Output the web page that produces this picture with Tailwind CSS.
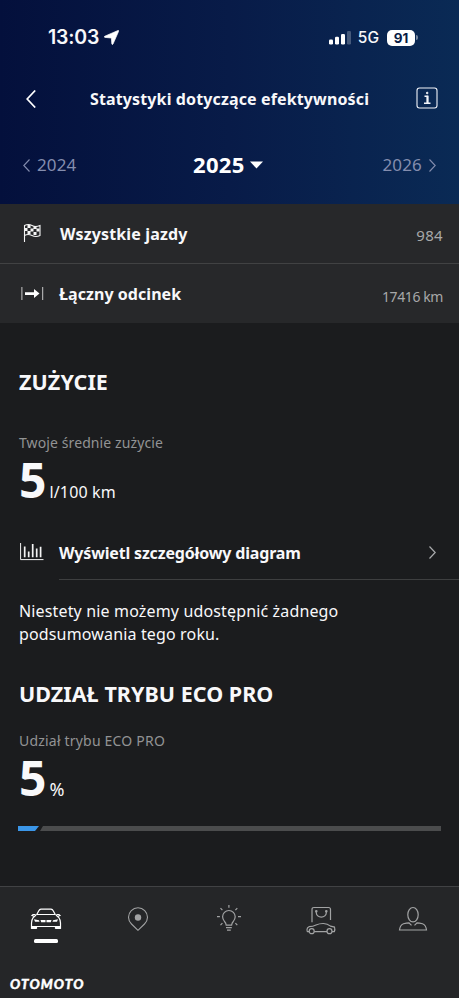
<!DOCTYPE html>
<html lang="pl">
<head>
<meta charset="utf-8">
<meta name="viewport" content="width=device-width">
<title>Statystyki dotyczące efektywności</title>
<script src="https://cdn.jsdelivr.net/npm/@tailwindcss/browser@4"></script>
</head>
<body class="w-[459px] h-[998px] overflow-hidden flex flex-col bg-[#1b1c1e] text-[#f8f8fa] font-['Noto_Sans','Open_Sans',sans-serif] whitespace-nowrap">
<header class="h-[204px] shrink-0 bg-linear-to-r from-[#04103c] via-[#081b48] to-[#0a2a55]">
  <div class="h-[75px] pl-[48px] pr-[41px] flex items-center font-['Inter',sans-serif]">
    <span class="text-[19.500px] font-semibold leading-none tracking-[-0.2px]">13:03</span>
    <svg class="ml-[5px]" width="15" height="15" viewBox="0 0 15 15" fill="#fff"><path d="M14 .5Q15 .2 14.6 1.3L9 14Q8.3 15.3 7.800 13.800L7.400 8 1 7.400Q-.5 7 .8 6.200Z" stroke="#fff" stroke-width=".7"/></svg>
    <div class="ml-auto flex items-center">
      <svg width="22" height="14" viewBox="0 0 22 14" fill="#fff"><rect x="0" y="8.5" width="4" height="5" rx="1.2"/><rect x="6" y="5.8" width="4" height="7.7" rx="1.2"/><rect x="12" y="3" width="4" height="10.5" rx="1.2"/><rect x="18" width="4" height="13.5" rx="1.2" opacity=".25"/></svg>
      <span class="ml-[7px] text-[15.5px] leading-none font-medium">5G</span>
      <span class="ml-[8px] w-[28px] h-4 rounded-[5px] bg-white text-[#081b45] text-[13.5px] font-bold leading-4 text-center">91</span>
      <span class="ml-px w-[2px] h-[5px] rounded-r-full bg-white/45"></span>
    </div>
  </div>
  <div class="h-[49px] pl-[26px] pr-[21px] flex items-center">
    <svg class="mb-[2px]" width="10" height="18" viewBox="0 0 10 18" fill="none" stroke="#fff" stroke-width="1.7"><path d="M9.2.5 1.2 9l8 8.5"/></svg>
    <h1 class="ml-[54px] text-[16px] leading-[49px] font-bold tracking-[0.130px]">Statystyki dotyczące efektywności</h1>
    <svg class="ml-auto mb-[3px]" width="22" height="22" viewBox="0 0 22 22" fill="none" stroke="#f1f4fa"><rect x="1" y="1" width="20" height="20" rx="2.5" stroke-width="1.1"/><path d="M8.5 9.3h3v7M8 16.3h6.5" stroke-width="1.5"/><path d="M11.5 8.8v7.5" stroke-width="2"/><circle cx="11.2" cy="6" r=".8" fill="#fff"/></svg>
  </div>
  <div class="h-[82px] pl-[23px] pr-[23px] flex items-center text-[#848dae]">
    <svg class="w-[8px] shrink-0" height="13" viewBox="0 0 8 13" fill="none" stroke="currentColor" stroke-width="1.1"><path d="M6.5.5.8 6.5l5.700 6"/></svg>
    <span class="ml-[6px] w-[43px] text-[17px] tracking-[0.150px]">2024</span>
    <span class="ml-[113px] mb-[2px] text-[22px] font-bold text-white tracking-[0.3px]">2025</span>
    <svg class="ml-[5px]" width="13" height="8" viewBox="0 0 13 8" fill="#fff"><path d="M0 .5h13L6.500 7.500Z"/></svg>
    <span class="ml-auto text-[17px] tracking-[0.150px]">2026</span>
    <svg class="ml-[7px]" width="7" height="13" viewBox="0 0 7 13" fill="none" stroke="currentColor" stroke-width="1.1"><path d="m.5.5 5.700 6-5.700 6"/></svg>
  </div>
</header>
<section class="shrink-0 bg-[#27282a]">
  <div class="h-[60px] border-b border-[#414243] pl-[20px] pr-[16px] flex items-center">
    <svg class="mb-px" width="24" height="20" viewBox="0 0 24 20" fill="none" stroke="#f5f5f5" stroke-width="1.1"><path d="M4.500 19V2.500q4-2 7.500 0t8 0v10q-4 2-8 0t-7.500 0"/><path fill="#f5f5f5" stroke="none" d="M7.500 2h3v3h-3zM13.500 3h3v3h-3zM4.500 5h3v3h-3zM10.500 5.500h3v3h-3zM16.500 5.500h3v3h-3zM7.500 8h3v3h-3zM13.500 9h3v3h-3z"/></svg>
    <span class="ml-[16px] text-[16px] leading-[56px] font-bold tracking-[0.150px]">Wszystkie jazdy</span>
    <span class="ml-auto mt-[4px] text-[15px] text-[#a7a8a9] tracking-[0.3px]">984</span>
  </div>
  <div class="h-[59px] pl-[21px] pr-[16px] flex items-center">
    <svg width="23" height="14" viewBox="0 0 23 14"><path d="M.9 0v13M21.700 0v13" stroke="#c8c8c8" stroke-width="1"/><path d="M4 5.300h9V2l5.500 4.500L13 11V7.900H4z" fill="#fff"/></svg>
    <span class="ml-[15px] mt-px text-[16px] leading-[56px] font-bold tracking-[0.050px]">Łączny odcinek</span>
    <span class="ml-auto mt-[5px] text-[14px] text-[#a7a8a9] tracking-[-0.400px]">17416 km</span>
  </div>
</section>
<main class="h-[563px] shrink-0 pt-[43px] pl-[19px]">
  <h2 class="text-[21.500px] leading-[32px] font-bold tracking-[0.080px]">ZUŻYCIE</h2>
  <p class="mt-[34px] text-[14px] leading-[22px] text-[#929394] tracking-[0.100px]">Twoje średnie zużycie</p>
  <p class="h-[50px] flex items-baseline"><b class="text-[48px] leading-[52px]">5</b><span class="ml-[3px] text-[16px] tracking-[0.150px]">l/100 km</span></p>
  <div class="mt-[24px] h-[52px] flex">
    <svg class="mt-[14px] shrink-0" width="26" height="20" viewBox="0 0 26 20" fill="none" stroke="#f3f3f3"><path d="M1.600 1v16.600H24.500" stroke-width="1"/><path d="M5.700 4.500v10.700M9.700 9.500v5.700M13.700 2v13.200M17.700 6.500v8.700M21.600 4.800v10.400" stroke-width="1.700"/></svg>
    <div class="ml-[14px] grow flex items-center pr-[23px] border-b border-[#3e3f40]">
      <span class="mb-[2px] text-[16px] leading-[48px] font-bold tracking-[-0.170px]">Wyświetl szczegółowy diagram</span>
      <svg class="ml-auto mb-[3px]" width="7" height="13" viewBox="0 0 7 13" fill="none" stroke="#aaabad" stroke-width="1.200"><path d="m.5.5 5.700 6-5.700 6"/></svg>
    </div>
  </div>
  <p class="mt-[20px] text-[16px] leading-[23px] tracking-[0.150px]">Niestety nie możemy udostępnić żadnego<br>podsumowania tego roku.</p>
  <h2 class="mt-[32px] text-[21.500px] leading-[32px] font-bold tracking-[0.030px]">UDZIAŁ TRYBU ECO PRO</h2>
  <p class="mt-[20px] text-[14px] leading-[22px] text-[#929394] tracking-[0.200px]">Udział trybu ECO PRO</p>
  <p class="h-[50px] flex items-baseline"><b class="text-[48px] leading-[52px]">5</b><span class="ml-[3px] text-[18px]">%</span></p>
  <svg class="mt-[24px] -ml-px" width="423" height="5" viewBox="0 0 423 5"><path d="M0 0h21l-4 5H0z" fill="#3b96e8"/><path d="M25 0h398v5H22z" fill="#4b4c4d"/></svg>
</main>
<nav class="h-[112px] shrink-0 bg-[#252628] border-t border-[#414244]">
  <div class="h-[62px] grid grid-cols-5 justify-items-center text-[#a2a3a4]">
    <div class="pt-[21px] flex flex-col items-center text-white">
      <svg width="32" height="22" viewBox="0 0 32 22" fill="none" stroke="currentColor" stroke-width="1.200"><path d="M6.500 7 8.800 2.700Q9.500 1.400 11 1.200h10Q22.500 1.400 23.200 2.700L25.500 7M7 6.500h18M6 7 3 9.800Q1.500 12 1.500 15v5.200h5V18.500h19v1.700h5V15q0-3-1.500-5.200L26 7M5.500 6.500H3l-1 1 2 .8M26.500 6.500H29l1 1-2 .8"/><path d="M4 11.200 9 12.200l.5 1.600H5zM28 11.200 23 12.200l-.5 1.600H27zM10.500 12h5v2.300h-4.300zM16.500 12h5l-.7 2.300h-4.300zM1.200 18h5.300v3H1.200zM25.500 18h5.300v3h-5.300z" fill="currentColor" stroke="none"/></svg>
      <span class="mt-[9px] w-[24px] h-[4px] rounded-[1.500px] bg-white"></span>
    </div>
    <svg class="mt-[20px]" width="22" height="25" viewBox="0 0 22 25" fill="none" stroke="currentColor" stroke-width="1.100"><path d="M11 23.300 4.500 17Q1.500 14 1.500 10.300a9.500 9.500 0 0 1 19 0Q20.500 14 17.500 17z"/><circle cx="11" cy="10.500" r="3.200" fill="currentColor" stroke="none"/></svg>
    <svg class="mt-[17px]" width="26" height="28" viewBox="0 0 26 28" fill="none" stroke="currentColor" stroke-width="1.200"><path d="M10.200 21.200Q10 19 8.500 17.500 6.600 15 6.600 12.800a6.300 6.300 0 0 1 12.600 0Q19.200 15 17.300 17.500 15.800 19 15.600 21.200ZM10 23.700h5.800M11 26.200h3.800M12.900 1v2.800M1 12.700h2.900M22 12.700h3M4.500 4.200l1.900 2M21.300 4.200l-1.900 2M4.500 21.200l1.900-2M21.300 21.200l-1.900-2"/></svg>
    <svg class="mt-[19px]" width="30" height="29" viewBox="0 0 30 29" fill="none" stroke="currentColor" stroke-width="1.200"><path d="M6 16.300V3.500Q6 1.500 8 1.500h14.500q2 0 2 2V14"/><path d="M10.300 5.500v1.200a5 4.500 0 0 0 10 0V5.500"/><circle cx="10.300" cy="5.300" r=".7"/><circle cx="20.300" cy="5.300" r=".7"/><path d="M3.200 25.700H1.500Q1 25.500 1 23.500T3 20.700q4-.2 7-1.700 3.500-1.600 7.500-1.500 4 .2 7 2.600l4 1q.8 2.600-.2 4.600h-2.300M8.200 25.700h12.800"/><circle cx="5.700" cy="25.200" r="2.500"/><circle cx="23.500" cy="25.200" r="2.500"/></svg>
    <svg class="mt-[19px]" width="30" height="26" viewBox="0 0 30 26" fill="none" stroke="currentColor" stroke-width="1.200"><ellipse cx="15" cy="8.700" rx="5.200" ry="7.200"/><path d="M13.500 19.300 11 16.800q-2.500 0-5.500 1-3.500 1.500-4 6.200h27q-.5-4.700-4-6.200-3-1-5.500-1l-2.500 2.500"/></svg>
  </div>
  <div class="mt-[26px] pl-[10px] font-['Lato',sans-serif] font-black italic text-[13.500px] leading-[18px] tracking-[1.100px] text-white [-webkit-text-stroke:0.4px_white]">OTOMOTO</div>
</nav>
</body>
</html>
